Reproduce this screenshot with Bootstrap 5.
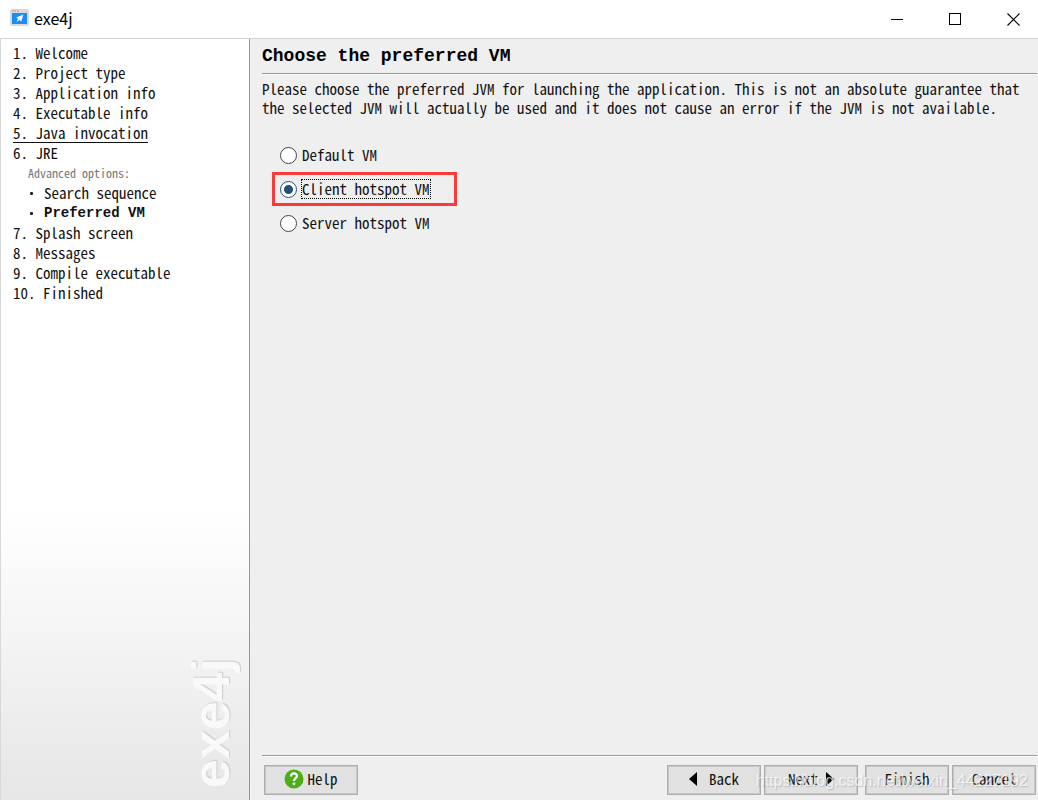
<!DOCTYPE html>
<html lang="en">
<head>
<meta charset="utf-8">
<meta name="viewport" content="width=device-width, initial-scale=1">
<title>exe4j</title>
<link href="https://cdn.jsdelivr.net/npm/bootstrap@5.3.0/dist/css/bootstrap.min.css" rel="stylesheet">
<style>
  body { font-family: "Noto Sans Mono CJK SC", "Liberation Mono", monospace; font-size: 15px; line-height: 20px; color: #111; background: #efefef; }
  .titlebar { height: 39px; padding-bottom: 2px; border-bottom: 1px solid #d4d4d4; background: #fff; font-family: "Noto Sans CJK SC", sans-serif; color: #000; }
  .app-name { font-size: 16px; font-weight: 400; line-height: 20px; }
  .win-btn { width: 58px; height: 36px; border: 0; background: none; padding: 0; }
  .win-btn:last-child { width: 50px; }
  .steps-pane { width: 250px; padding: 4px 12px 12px 12px; border-left: 1px solid #d8d8d8; border-right: 1px solid #989898; background: linear-gradient(#fff 62%, #e6e6e6); }
  .steps-pane a { display: block; width: fit-content; height: 20px; color: #111; text-decoration: none; white-space: pre; }
  .steps-pane a.visited-step { text-decoration: underline; text-underline-offset: 3px; }
  .steps-pane .adv-label { font-size: 12px; color: #777; padding-left: 15px; }
  .steps-pane .sub-steps a { display: flex; align-items: center; gap: 11px; padding-left: 17px; }
  .sub-steps a::before { content: ""; width: 3px; height: 3px; border-radius: 1px; background: #222; }
  .current-step { font: bold 14px/20px "Liberation Mono", monospace; color: #000; }
  .brand-mark { writing-mode: vertical-rl; rotate: 180deg; font: bold 52px/52px "Liberation Sans", sans-serif; color: #f9f9f9; text-shadow: 1px 1px 1px #ccc; }
  .wizard-pane { padding: 0 1px 5px 12px; }
  .pane-title { font: bold 18px/34px "Liberation Mono", monospace; color: #000; border-bottom: 1px solid #989898; box-shadow: 0 1px #f8f8f8; }
  .intro { line-height: 19px; padding-top: 5px; }
  .vm-list { padding: 21px 0 0 10px; }
  .vm-option { height: 34px; width: 185px; padding-left: 5px; border: 3px solid transparent; }
  .vm-option.marked { border-color: #fb3a3a; }
  .vm-option input { appearance: none; width: 17px; height: 17px; margin: 0 5px 0 0; border: 1px solid #444; border-radius: 50%; background: #fff; }
  .vm-option input:checked { border-color: #215178; background: radial-gradient(circle, #215178 4px, #fff 5px); }
  .vm-option label { line-height: 18px; }
  .marked label { outline: 1px dotted #000; }
  .footer-bar { border-top: 1px solid #989898; box-shadow: inset 0 1px #fff; padding: 9px 1px 0 2px; }
  .wiz-btn { height: 30px; width: 94px; border: 1px solid #adadad; outline: 1px solid #c8c8c8; outline-offset: -2px; background: #e1e1e1; color: #111; padding: 0 0 2px; }
  .wiz-btn.narrow { width: 84px; }
  .btn-run { gap: 3px; }
  .page-stamp { right: 9px; bottom: 4px; font: 16px/20px "Liberation Sans", sans-serif; color: rgba(255,255,255,.7); text-shadow: 1px 1px 1px rgba(120,120,120,.35); pointer-events: none; }
</style>
</head>
<body class="min-vh-100 d-flex flex-column">
<header class="titlebar d-flex align-items-center">
  <svg class="ms-2" width="22" height="20" viewBox="0 0 22 20" aria-hidden="true">
    <rect x="2" y="1" width="19" height="17" rx="2" fill="#d9d9dc"/>
    <rect x="4" y="5" width="15" height="11" fill="#1a8cf5"/>
    <path d="M4 3h1.500M6.500 3h1.500M9 3h1.500" stroke="#f07058" stroke-width="1.200"/>
    <path d="M15.500 6.500l-7.500 3 2 1.200-1.500 3.300 3-2 1.800 1.500z" fill="#eef6ff"/>
  </svg>
  <h1 class="app-name m-0 ms-1">exe4j</h1>
  <div class="ms-auto d-flex">
    <button class="win-btn" aria-label="Minimize"><svg width="13" height="13" aria-hidden="true"><path d="M0 6.500h12" stroke="#000"/></svg></button>
    <button class="win-btn" aria-label="Maximize"><svg width="13" height="13" aria-hidden="true"><rect x=".5" y=".5" width="11" height="11" fill="none" stroke="#000"/></svg></button>
    <button class="win-btn ms-1" aria-label="Close"><svg width="13" height="13" aria-hidden="true"><path d="M.5.5l12 12M12.500.5l-12 12" stroke="#000" stroke-width="1.100"/></svg></button>
  </div>
</header>
<div class="d-flex flex-grow-1">
  <aside class="steps-pane d-flex flex-column flex-shrink-0">
    <nav aria-label="Wizard steps">
      <a href="#">1. Welcome</a>
      <a href="#">2. Project type</a>
      <a href="#">3. Application info</a>
      <a href="#">4. Executable info</a>
      <a href="#" class="visited-step">5. Java invocation</a>
      <a href="#">6. JRE</a>
      <div class="adv-label">Advanced options:</div>
      <div class="sub-steps">
        <a href="#">Search sequence</a>
        <a href="#" class="current-step" aria-current="step">Preferred VM</a>
      </div>
      <a href="#">7. Splash screen</a>
      <a href="#">8. Messages</a>
      <a href="#">9. Compile executable</a>
      <a href="#">10. Finished</a>
    </nav>
    <div class="brand-mark mt-auto align-self-end">exe4j</div>
  </aside>
  <main class="wizard-pane d-flex flex-column flex-grow-1">
    <h2 class="pane-title m-0">Choose the preferred VM</h2>
    <p class="intro m-0">Please choose the preferred JVM for launching the application. This is not an absolute guarantee that the selected JVM will actually be used and it does not cause an error if the JVM is not available.</p>
    <div class="vm-list" role="radiogroup" aria-label="Preferred VM">
      <div class="vm-option d-flex align-items-center"><input type="radio" name="vm" id="vmDefault"><label for="vmDefault">Default VM</label></div>
      <div class="vm-option marked d-flex align-items-center"><input type="radio" name="vm" id="vmClient" checked><label for="vmClient">Client hotspot VM</label></div>
      <div class="vm-option d-flex align-items-center"><input type="radio" name="vm" id="vmServer"><label for="vmServer">Server hotspot VM</label></div>
    </div>
    <footer class="footer-bar position-relative d-flex mt-auto">
      <button class="wiz-btn d-flex align-items-center justify-content-center btn-run me-auto">
        <svg width="20" height="20" viewBox="0 0 20 20" aria-hidden="true">
          <circle cx="10" cy="10" r="9.500" fill="#4caf17"/>
          <path d="M7 7.500c0-4 6-4 6-.5 0 2.200-3 2.200-3 5" fill="none" stroke="#fff" stroke-width="2.200"/>
          <circle cx="10" cy="14.800" r="1.400" fill="#fff"/>
        </svg>Help</button>
      <div class="d-flex btn-run">
        <button class="wiz-btn d-flex align-items-center justify-content-center gap-2"><svg class="me-1" width="8" height="14" aria-hidden="true"><path d="M8 0v14L0 7z"/></svg>Back</button>
        <button class="wiz-btn d-flex align-items-center justify-content-center gap-2 me-1">Next<svg width="8" height="14" aria-hidden="true"><path d="M0 0v14l8-7z"/></svg></button>
        <button class="wiz-btn narrow">Finish</button>
        <button class="wiz-btn narrow">Cancel</button>
      </div>
      <span class="page-stamp position-absolute">https://blog.csdn.net/weixin_44227192</span>
    </footer>
  </main>
</div>
<script src="https://cdn.jsdelivr.net/npm/bootstrap@5.3.0/dist/js/bootstrap.bundle.min.js"></script>
</body>
</html>
